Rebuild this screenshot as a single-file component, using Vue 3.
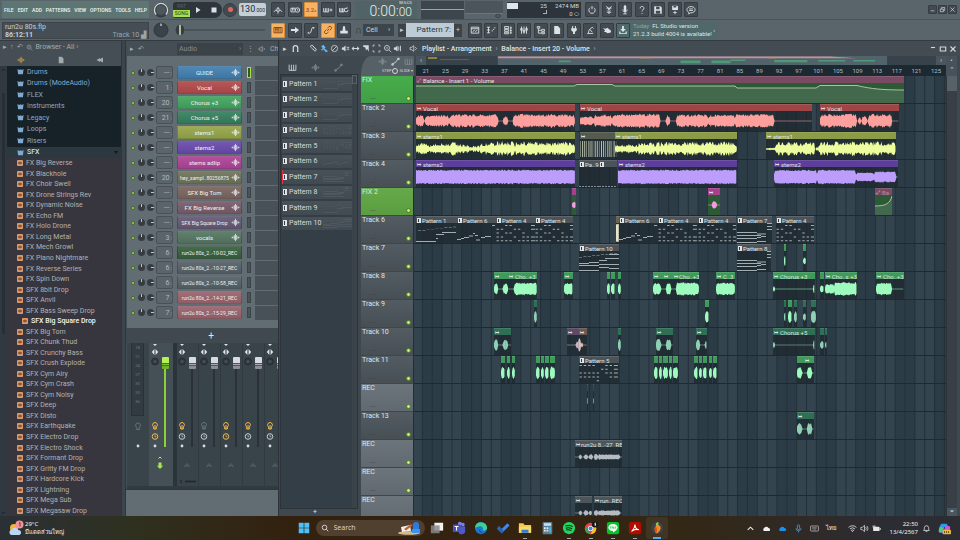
<script setup>
import { ref } from 'vue'

const menus = ['FILE', 'EDIT', 'ADD', 'PATTERNS', 'VIEW', 'OPTIONS', 'TOOLS', 'HELP']

/* Stroke icons on a 16 x 16 grid; names ending in "F" are filled. */
const icons = {
  metronome: 'M8 14V4M8 4L5.5 7M8 4L10.5 7M1.5 11L5 7.5L7 11M14.5 11L11 7.5L9 11',
  wait: 'M1.5 5H9M1.5 5V11H9M4 5V9M6.5 5V9M12 4.5A3.5 3.5 0 1 0 12 11.5A3.5 3.5 0 1 0 12 4.5M12 6.5V8.2H13.5',
  blend: 'M1 5V11H9V5M3.8 5V11M6.3 5V11M10.5 8H15M12.8 5.8V10.2',
  loop: 'M1 5V11H8V5M3.3 5V11M5.6 5V11M12 5A3 3 0 1 0 14.5 8M12 5L13.6 3.6M12 5L13.4 6.6',
  piano: 'M1.5 4H14.5V12.5H1.5ZM4.7 4V12M8 4V12M11.3 4V12M4.7 4V8.5M8 4V8.5',
  arrowF: 'M1.5 6.5H8V3L14.5 8L8 13V9.5H1.5Z',
  curve: 'M3 13H6C9 13 8 6 10.5 4H13M3 13L4 11M13 4L12 6',
  link: 'M6.5 9.5L10 6M7 5L9.5 2.8A2.4 2.4 0 0 1 13 6.2L10.8 8.8M9 11L6.5 13.2A2.4 2.4 0 0 1 3 9.8L5.2 7.2',
  stampF: 'M6.5 2H9.5L10.3 9H14V13.5H2V9H5.7Z',
  playlist: 'M2 3.5H14V13H2ZM2 6H14M4 11L7 8.5L9 10.5L12 8',
  roll: 'M1.5 3.5H6.5M1.5 8H6.5M1.5 12.5H6.5M4 3.5V12.5M9 9.5H11M11 7H13M13 4.5H15',
  rack: 'M2.5 2.5H9V5.5H2.5ZM2.5 7H9V10H2.5ZM2.5 11.5H9V14H2.5ZM12.5 2.5V14M11 4.5H14M11 9H14M11 12.5H14',
  mixer: 'M4 2.5V14M8 2.5V14M12 2.5V14M2.8 5.5H5.2V8.5H2.8ZM6.8 8.5H9.2V11.5H6.8ZM10.8 5.5H13.2V8.5H10.8Z',
  tree: 'M2 2.5H6V5H2ZM3.8 5V13H8M3.8 8.5H8M9 7H13.5V10H9ZM9 11.5H13.5V14H9Z',
  fileF: 'M3.5 1.5H9.5L13 5.5V14.5H3.5Z',
  plugF: 'M5 1.5H6.6V5H9.4V1.5H11V5H12.5V8.5L9.5 11.2V14.5H6.5V11.2L3.5 8.5V5H5Z',
  tool: 'M3.5 13.5H13M5.5 13L6.5 8L11.5 3.5M8 7L11.5 11.5M11.5 3.5L13.5 5.5',
  pointF: 'M1.5 5L6 5.8L8.5 4.3L14.5 9L14 12L9 13L6 11L3.2 11.2L5 8.3Z',
  saveF: 'M2 2H12L14 4V14H2ZM5 2.8V6.8H10.5V2.8ZM4.5 9V13.5H11.5V9Z',
  downloadF: 'M6.5 1.5H9.5V6.5H12.5L8 11L3.5 6.5H6.5ZM2 10.5H4V13H12V10.5H14V14.5H2Z',
  power: 'M5.2 4.2A5 5 0 1 0 10.8 4.2M8 1.5V7',
  cut: 'M4 2L10 9M12 2L6 9M4.5 11.5H11.5M8 9V14.5M4 5H12',
  micF: 'M6 2.5A2 2 0 0 1 10 2.5V8A2 2 0 0 1 6 8ZM3.8 7H5A3 3 0 0 0 11 7H12.2A4.2 4.2 0 0 1 8.7 11.4V13.5H11V14.8H5V13.5H7.3V11.4A4.2 4.2 0 0 1 3.8 7Z',
  help: 'M5 5.5A3 3 0 1 1 9.5 7.8C8.3 8.6 8 9.2 8 10.5M8 12.8V14.2',
  save2F: 'M3.5 1H11.5L12.8 2.3V8H3.5ZM5.5 1.5V4H10V1.5ZM7.3 9H8.7V11H11V12.4H8.7V14.8H7.3V12.4H5V11H7.3Z',
  chat: 'M8 2.5C12 2.5 14.5 4.7 14.5 7.5S12 12.5 8 12.5H7L4.5 14.5V11.8C2.5 10.8 1.5 9.3 1.5 7.5C1.5 4.7 4 2.5 8 2.5ZM5 6.3H11M5 8.8H11',
  wave: 'M1 8H3M3.5 6V10M6 4V12M8 1.5V14.5M10 4V12M12.5 6V10M13 8H15',
  slope: 'M2.5 13L5 10.5H7L11 5.5L13.5 3M1.5 12H4V14.5H1.5ZM12 2H14.5V4.5H12Z',
  keys: 'M2 3V13H14V3M6 3V13M10 3V13',
  magnet: 'M4 13V7A4 4 0 0 1 12 7V13M2.8 13H5.4M10.6 13H13.2',
  pencil: 'M3 3L5.5 2L13 10L11 13L3 5.5ZM5.5 2L13 10M7 9L9 11',
  brushF: 'M2 4L6 1.5L10 6L8 8L14.5 13L10 14.5L6.5 9.5L3.5 12L2 10L5 7.5Z',
  no: 'M8 2.5A5.5 5.5 0 1 0 8 13.5A5.5 5.5 0 1 0 8 2.5M4 12L12 4',
  muteF: 'M1.5 6H4L8 2.5V13.5L4 10H1.5ZM9.5 5.5L10.5 4.5L15 10L14 11ZM14 4.5L15 5.5L10.5 11L9.5 10Z',
  slipF: 'M1 8L5 4V7H11V4L15 8L11 12V9H5V12Z',
  sliceF: 'M2 2H12V14L9.5 9L7 11L6 6L2 5Z',
  select: 'M2 5V2H5M11 2H14V5M14 11V14H11M5 14H2V11',
  zoom: 'M7 2.5A4.5 4.5 0 1 0 7 11.5A4.5 4.5 0 1 0 7 2.5M10.5 10.5L14.5 14.5M5 7H9',
  playF: 'M1.5 6H4L8 2.5V13.5L4 10H1.5ZM9.5 4.5H11V11.5H9.5ZM12.5 3H14V13H12.5Z',
  speaker: 'M2 6H4.5L8.5 3V13L4.5 10H2ZM11 5.5L13.5 8L11 10.5',
}

const modeButtons = ['metronome', 'wait', 'count', 'blend', 'loop']
const toolButtons = ['piano', 'arrowF', 'curve', 'link', 'stampF']
const panelButtons = ['playlist', 'roll', 'rack', 'mixer', 'tree', 'fileF', 'plugF', 'tool', 'pointF', 'downloadF']
const sysButtons = ['power', 'cut', 'micF', 'help', 'saveF', 'save2F', 'chat']
const playlistTools = ['pencil', 'brushF', 'no', 'muteF', 'slipF', 'sliceF', 'select', 'zoom', 'playF']

const folders = ['Drums', 'Drums (ModeAudio)', 'FLEX', 'Instruments', 'Legacy', 'Loops', 'Risers', 'SFX']
const files = [
  'FX Big Reverse', 'FX Blackhole', 'FX Choir Swell', 'FX Drone Strings Rev', 'FX Dynamic Noise', 'FX Echo FM',
  'FX Holo Drone', 'FX Long Metal', 'FX Mech Growl', 'FX Piano Nightmare', 'FX Reverse Series', 'FX Spin Down',
  'SFX 8bit Drop', 'SFX Anvil', 'SFX Bass Sweep Drop', 'SFX Big Square Drop', 'SFX Big Tom', 'SFX Chunk Thud',
  'SFX Crunchy Bass', 'SFX Crush Explode', 'SFX Cym Airy', 'SFX Cym Crash', 'SFX Cym Noisy', 'SFX Deep',
  'SFX Disto', 'SFX Earthquake', 'SFX Electro Drop', 'SFX Electro Shock', 'SFX Formant Drop', 'SFX Gritty FM Drop',
  'SFX Hardcore Kick', 'SFX Lightning', 'SFX Mega Sub', 'SFX Megasaw Drop',
]
const selectedFile = ref('SFX Big Square Drop')

const channels = [
  ['GUIDE', '---', '#4480b0', 1], ['Vocal', '1', '#b24a4b', 1], ['Chorus +3', '20', '#43a560', 1],
  ['Chorus +5', '21', '#357f5e', 1], ['stems1', '---', '#96a548', 1], ['stems2', '---', '#694bab', 1],
  ['stems adlip', '---', '#ae4597', 1], ['hey_sampl..80256875', '20', '#71745a', 1],
  ['SFX Big Tom', '---', '#7a665f', 1], ['FX Big Reverse', '---', '#785b6a', 1],
  ['SFX Big Square Drop', '---', '#665a76', 1], ['vocals', '3', '#557760', 1],
  ['run2u 80s_2..-10-02_REC', '6', '#38603f', 0], ['run2u 80s_2..-10-27_REC', '6', '#566168', 0],
  ['run2u 80s_2..-10-58_REC', '6', '#566168', 0], ['run2u 80s_2..-14-21_REC', '7', '#99646c', 0],
  ['run2u 80s_2..-15-29_REC', '7', '#99646c', 0],
].map(([name, out, color, wave]) => ({ name, out, color, wave }))

const strips = [
  { master: true, lit: true, clock: true },
  { lit: true }, { lit: false }, { lit: true, clock: true }, { lit: true }, { lit: true },
]

const patterns = Array.from({ length: 10 }, (_, i) => 'Pattern ' + (i + 1))
const bars = Array.from({ length: 27 }, (_, i) => 21 + i * 4)

/* Timeline geometry, in units of the lane's view box. */
const LANE = 532
const ORIGIN = 414
const beatLines = Array.from({ length: 55 }, (_, i) => -2 + i * 9.85)
const shades = Array.from({ length: 14 }, (_, i) => 28 + (i - 1) * 39.4)

function rng(seed) {
  let s = seed * 7919 + 13
  return () => ((s = (s * 16807) % 2147483647) / 2147483647)
}
function wavePath(x0, x1, env, seed, rough) {
  const r = rng(seed)
  const top = []
  const bottom = []
  for (let x = x0; x <= x1; x += 0.7) {
    let a = 0.3
    for (const [s, e, v] of env) {
      if (x >= s && x <= e) {
        const edge = Math.min(1, (x - s + 0.6) / 1.6, (e - x + 0.6) / 1.6)
        a = v * edge * (1 - rough * r())
      }
    }
    top.push(`${(x - x0).toFixed(1)} ${(10 - a).toFixed(1)}`)
    bottom.unshift(`${(x - x0).toFixed(1)} ${(10 + a * (1 - rough * 0.3 * r())).toFixed(1)}`)
  }
  return 'M' + top.concat(bottom).join('L') + 'Z'
}

const dots = {
  4: ['..xx....W', 'xx..xx..W', 'x.xx..x.', 'xx..x.xxW', 'xxxx.xxxW'],
  5: ['xxxx..xxW', '.....xx.W', 'xxxxx.xxW', 'xxxxx..xW', '....x...'],
}
function notePath(kind, w) {
  const bar = (x, y, l, h = 0.9) => `M${x} ${y}h${l}v${h}h${-l}z`
  let d = ''
  if (dots[kind]) {
    dots[kind].forEach((row, j) => [...row].forEach((c, i) => {
      if (c !== '.') d += bar(0.5 + i * 4.3, 2 + j * 3.8, c === 'W' ? 4 : 2.4, 1)
    }))
  } else if (kind === 1) {
    for (let i = 0; i < 9; i++) d += bar(2 + i * 4.4, 7 - Math.floor(i / 2) * 0.8, 3, 0.4)
    d += bar(0, 18, 20) + bar(20, 11, 8) + bar(26, 9, 14) + bar(20, 15, 2)
  } else if (kind === 6) {
    d += bar(0, 16, 4) + bar(4, 15, 3) + bar(7, 14, 5) + bar(12, 12.5, 4) + bar(16, 10, 2) + bar(18, 12, 3)
      + bar(19, 16.5, 4) + bar(24, 14, 4) + bar(28, 13, 6) + bar(35, 2, 3)
  } else if (kind === 7 || kind === 8) {
    d += bar(0, 9, 20) + bar(0, 12, 24) + bar(0, 15, 20) + bar(0, 19, 20) + bar(20, 10.5, 9) + bar(20, 14, 4)
      + bar(24, 13, 5) + bar(30, 0, 5) + bar(30, 3, 5) + bar(30, 6, 5) + bar(20, 18, 9)
  } else if (kind === 10) {
    for (let i = 0; i < 9; i++) d += bar(i * 4.4, 6 - i * 0.5, 3, 0.4)
    d += bar(0, 12, 10) + bar(10, 11, 10) + bar(20, 9, 8) + bar(26, 7, 14) + bar(0, 14, 20) + bar(20, 13, 8)
      + bar(30, 3, 10) + bar(28, 13, 12) + bar(0, 19, 20) + bar(20, 16, 10) + bar(30, 17, 10)
  } else if (kind === 9) {
    for (let i = 0; i < w; i += 3) d += bar(i, 19, 2, 0.8)
  }
  return d
}

let seed = 1
const pos = (x0, x1) => ({ left: ((x0 - ORIGIN) / LANE) * 100 + '%', width: ((x1 - x0) / LANE) * 100 + '%' })
function audio(x0, x1, head, fill, name = '', env = null, rough = 0.35) {
  return {
    type: 'audio', w: x1 - x0, style: pos(x0, x1), head, fill, name,
    path: wavePath(x0, x1, env || [[x0, x1, 6.5]], seed++, rough),
  }
}
function pattern(x0, x1, kind, name = 'Pattern ' + kind) {
  return { type: 'pattern', w: x1 - x0, style: pos(x0, x1), head: '#4c545a', fill: '#a3aeb3', name, path: notePath(kind, x1 - x0) }
}
function auto(x0, x1, name, line, area) {
  return { type: 'auto', w: x1 - x0, style: pos(x0, x1), head: '#7a4a62', fill: 'none', name, path: line, area }
}
const vocal = (a, b, env) => audio(a, b, '#a04546', '#fd9f9d', 'Vocal', env, 0.4)
const stem1 = (a, b, env) => audio(a, b, '#8c9b45', '#edfc9c', 'stems1', env, 0.6)
const stem2 = (a, b, env) => audio(a, b, '#5e3e9b', '#bc9dfc', 'stems2', env, 0.18)
const g = (a, b, name = '', env = null) => audio(a, b, '#3f9a5b', '#9dfcbd', name, env, 0.25)
const t = (a, b, name = '', env = null) => audio(a, b, '#2f6f55', '#8fd0b4', name, env, 0.25)
const rec = (a, b, name, env) => audio(a, b, '#4d565c', '#b4bcc2', name, env, 0.3)
const slivers = (fn, list) => list.map(([a, b]) => fn(a, b))

const stutter = Array.from({ length: 18 }, (_, i) => {
  const x = (i * 2.1).toFixed(1)
  return `M${x} 2h${i % 3 ? 1 : 0.6}v16h${i % 3 ? -1 : -0.6}z`
}).join('')

const tracks = [
  { name: 'FIX', tone: 'fix', clips: [
    auto(416, 904, 'Balance - Insert 1 - Volume',
      'M0 3H158L161 1.5H196L199 3H319L321 5H400L404 2.5H441C455 6 468 7 488 7',
      'M0 3H158L161 1.5H196L199 3H319L321 5H400L404 2.5H441C455 6 468 7 488 7V20H0Z'),
  ] },
  { name: 'Track 2', clips: [
    vocal(416, 575, [[416, 424, 6], [425, 449, 6.5], [449.5, 498, 7], [503, 508, 5], [513, 575, 7.2]]),
    vocal(580, 812, [[580, 595, 5], [594, 612, 6.5], [612, 660, 7.6], [666, 670, 6.5], [676, 708, 6.8], [708, 735, 6.6], [735, 774, 7.2]]),
    vocal(820, 899, [[820, 857, 7.4], [858, 861, 5], [862, 867, 6], [868, 892, 7.2]]),
  ] },
  { name: 'Track 3', clips: [
    stem1(416, 575, [[416, 430, 6], [430, 450, 6.5], [450, 458, 8], [458, 470, 5], [470, 480, 3.6], [480, 495, 6.6], [495, 515, 8], [515, 575, 7.6]]),
    { type: 'audio', w: 37, style: pos(580, 617), head: '#545a4c', fill: '#b9bfa8', name: '', path: stutter },
    stem1(615, 737, [[615, 640, 5], [638, 655, 7], [655, 660, 8.5], [660, 737, 7.4]]),
    stem1(766, 896, [[766, 776, 1.6], [775, 815, 7.2], [816, 818, 3], [818, 896, 7.8]]),
  ] },
  { name: 'Track 4', clips: [
    stem2(416, 575, [[415, 576, 7.4]]),
    pattern(579, 599, 9, 'Pa..9'), pattern(599, 617, 9, ' '),
    stem2(618, 737, [[617, 738, 7.4]]),
    stem2(774, 898, [[774, 817, 7.2], [817, 856, 7.4], [856, 874, 4.6], [874, 896, 5.6]]),
  ] },
  { name: 'FIX 2', tone: 'fix2', clips: [
    audio(572, 576, '#a6408f', '#f79be0', '', [[572, 576, 3.4]]),
    audio(708, 720, '#a6408f', '#f79be0', '', [[712, 717, 4.4]]),
    auto(875, 892, 'Ba', 'M0 11C10 11 15 9 17 1', 'M0 11C10 11 15 9 17 1V20H0Z'),
  ].map((c) => ({ ...c, green: true })) },
  { name: 'Track 6', clips: [
    pattern(416, 457, 1), pattern(457, 496, 6), pattern(496, 535, 4), pattern(535, 573, 4),
    audio(616, 619, '#6a6552', '#e9e4c8', '', [[615, 620, 9]], 0.05),
    pattern(619, 658, 6), pattern(658, 698, 4), pattern(698, 736, 4), pattern(737, 772, 7), pattern(776, 814, 4),
  ] },
  { name: 'Track 7', clips: [pattern(579, 619, 10), pattern(737, 771, 8), g(784, 786), g(803, 806, '', [[803, 806, 4]])] },
  { name: 'Track 8', clips: [
    g(494, 508, '', [[494, 498, 6], [503, 508, 5.5]]),
    g(508, 537, 'Cho..+3', [[514, 537, 6.6]]),
    ...slivers(g, [[564, 573], [607, 610], [611, 615], [618, 621]]),
    g(653, 663, '', [[653, 661, 6]]), g(663, 673, '', [[666, 671, 6]]), g(673, 699, 'Cho..+3', [[676, 699, 6.8]]),
    g(716, 735, 'C..3'), g(773, 815, 'Chorus +3', [[773, 775, 4], [813, 815, 6]]),
    g(820, 824, '', [[820, 824, 4]]), g(825, 857, 'Cho..s +3', [[825, 835, 5], [834, 857, 7]]), g(876, 904, 'Cho..+3', [[876, 892, 6.4]]),
  ] },
  { name: 'Track 9', clips: [
    ...slivers(t, [[534, 537], [784, 786]]), ...slivers(g, [[705, 709], [788, 792]]),
    t(794, 797), t(803, 806, '', [[803, 806, 4]]), t(811, 816),
  ] },
  { name: 'Track 10', clips: [
    t(494, 506, '', [[494, 498, 6], [503, 507, 6]]), t(506, 511, '', [[505, 508, 5]]),
    audio(567, 579, '#5c4b62', '#c8b6c8', '', [[576, 578, 4], [578, 582, 8]], 0.1), audio(579, 587, '#6d5850', '#d8bdb0', '', [[576, 581, 7], [581, 583, 3]], 0.1),
    t(618, 621), t(656, 673, '', [[656, 661, 6], [666, 671, 6]]), t(696, 707, '', [[696, 700, 6], [705, 707, 5]]),
    t(773, 815, 'Chorus +5', [[773, 775, 4], [813, 815, 6]]), t(820, 824, '', [[820, 824, 4]]), t(825, 827, '', [[825, 827, 4]]),
  ] },
  { name: 'Track 11', clips: [
    ...slivers(g, [[501, 505], [507, 510], [512, 515], [536, 540], [541, 544], [545, 549], [550, 555]]),
    pattern(579, 619, 5),
    ...slivers(g, [[654, 658], [659, 662], [663, 668], [669, 672], [673, 678], [694, 698], [699, 702], [703, 707], [709, 712], [713, 717]]),
    g(797, 804, '', [[797, 802, 6]]), g(804, 814, '', [[807, 812, 6]]),
  ] },
  { name: 'REC', tone: 'rec', clips: [audio(587, 588, '#3c4a38', '#a9b98c', '', [[586, 589, 3]]), audio(593, 594, '#3c4a38', '#a9b98c', '', [[592, 595, 3]])] },
  { name: 'Track 13', clips: [t(797, 814, '', [[797, 802, 6], [807, 812, 6]])] },
  { name: 'REC', tone: 'rec', clips: [rec(575, 622, 'run2u 8..-27_REC', [[579, 582, 3], [584, 588, 3], [589, 593, 3], [594, 598, 3.4], [598, 620, 2.8]])] },
  { name: 'REC', tone: 'rec', clips: [] },
  { name: 'REC', tone: 'rec', clips: [
    rec(575, 592, '', [[579, 582, 3], [584, 588, 3], [589, 592, 3]]),
    rec(594, 622, 'run..REC', [[594, 598, 3.4], [598, 620, 2.8]]),
  ] },
]

const isFilled = (n) => n.endsWith('F')
</script>

<template>
  <div class="app">
    <header class="top">
      <div class="bar row1">
        <nav class="menu"><button v-for="m in menus" :key="m">{{ m }}</button></nav>
        <svg class="knob" viewBox="0 0 16 16"><circle cx="8" cy="8" r="7" class="ring" /><path d="M3.2 12.6A6.6 6.6 0 1 1 12.8 12.6" class="arc" /><circle cx="8" cy="8" r="4.8" class="cap" /></svg>
        <div class="transport">
          <div class="pill">
            <button class="mode"><small>PAT</small><small class="on">SONG</small></button>
            <button aria-label="Play"><svg viewBox="0 0 8 8"><path d="M2 1L6.5 4L2 7Z" /></svg></button>
            <button aria-label="Stop"><svg viewBox="0 0 8 8"><path d="M1.5 1.5H6.5V6.5H1.5Z" /></svg></button>
          </div>
          <button class="record" aria-label="Record"><i></i></button>
          <output class="tempo">130<small>.000</small></output>
        </div>
        <div class="buttons">
          <button v-for="n in modeButtons" :key="n" class="tb" :class="{ hot: n === 'count' }" :aria-label="n">
            <span v-if="n === 'count'" class="count">3.2ₓ</span>
            <svg v-else viewBox="0 0 16 16"><path :d="icons[n]" /></svg>
          </button>
        </div>
        <div class="clock"><small>M:S:CS</small><output>0:00:<span>00</span></output></div>
        <svg class="scope" viewBox="0 0 82 18" preserveAspectRatio="none"><rect width="43" height="18" fill="#3d464c" /><path d="M0 8.5H43" stroke="#9aa8ad" /><rect x="44" width="38" height="12" fill="#4b555b" /><path d="M44 12.5H82" stroke="#6a757b" /><ellipse cx="77" cy="15" rx="2.4" ry="1.4" fill="none" stroke="#343c42" /></svg>
        <div class="cpu"><i></i><span>25</span><span>2474 MB</span><b></b><em></em><span>0 ⬭</span></div>
        <div class="buttons">
          <button v-for="n in sysButtons" :key="n" class="tb" :aria-label="n">
            <svg viewBox="0 0 16 16" :class="{ fill: isFilled(n) }"><path :d="icons[n]" /></svg>
          </button>
        </div>
        <div class="win">
          <button class="tb" aria-label="Minimize"><svg viewBox="0 0 16 16"><path d="M4 11H12" /></svg></button>
          <button class="tb" aria-label="Restore"><svg viewBox="0 0 16 16"><path d="M3 7H10V13H3ZM6 7V3.5H13V10H10" /></svg></button>
          <button class="tb" aria-label="Close"><svg viewBox="0 0 16 16"><path d="M3.5 3.5L12.5 12.5M12.5 3.5L3.5 12.5" /></svg></button>
        </div>
      </div>
      <div class="bar row2">
        <div class="hint"><p>run2u 80s.flp</p><p><b>86:12:11</b><span>Track 10 ▟</span></p></div>
        <svg class="knob" viewBox="0 0 16 16"><circle cx="8" cy="8" r="7" class="ring" /><circle cx="8" cy="8" r="5" class="cap dark" /><path d="M8 1.5V4" class="arc" /></svg>
        <input class="pitch" type="range" min="0" max="100" value="3" aria-label="Song position" />
        <div class="buttons">
          <button v-for="n in toolButtons" :key="n" class="tb" :class="{ hot: n === 'piano' || n === 'link' }" :aria-label="n">
            <svg viewBox="0 0 16 16" :class="{ fill: isFilled(n) }"><path :d="icons[n]" /></svg>
          </button>
        </div>
        <div class="snap">
          <svg viewBox="0 0 16 16"><path :d="icons.magnet" /></svg>
          <select aria-label="Snap"><option>Cell</option></select><i>›</i>
        </div>
        <div class="patsel"><button aria-label="Previous">▸</button><output>Pattern 7<i>:</i></output><button>+</button></div>
        <div class="buttons">
          <button v-for="n in panelButtons" :key="n" class="tb" :class="{ teal: n === 'downloadF' }" :aria-label="n">
            <svg viewBox="0 0 16 16" :class="{ fill: isFilled(n) }"><path :d="icons[n]" /></svg>
          </button>
        </div>
        <a class="news" href="#"><span><em>Today</em>&nbsp; FL Studio version<br />21.2.3 build 4004 is available!</span><i>›</i></a>
      </div>
    </header>

    <main class="work">
      <aside class="browser">
        <div class="bhead">
          <div class="crumb"><span>▸</span><span>↑</span><span>↶</span><svg viewBox="0 0 16 16"><path :d="icons.zoom" /></svg><span>Browser - All ›</span></div>
          <div class="btabs">
            <svg viewBox="0 0 16 16" class="gold"><path :d="icons.wave" /></svg>
            <svg viewBox="0 0 16 16" class="fill"><path :d="icons.fileF" /></svg>
            <svg viewBox="0 0 16 16" class="fill"><path d="M1 8L8 4V6L14 3V13L8 10V12Z" /></svg>
          </div>
        </div>
        <div class="blist">
          <div class="rail">
            <svg viewBox="0 0 7 7"><path d="M2 4.5L3.5 3L5 4.5" /></svg>
            <i></i>
            <svg viewBox="0 0 7 7"><path d="M2 3L3.5 4.5L5 3" /></svg>
          </div>
          <div class="items">
            <ul class="folders">
              <li v-for="f in folders" :key="f" :class="{ open: f === 'SFX' }"><svg viewBox="0 0 16 16"><path d="M1 2L5 4.5L8 3L11 4.5L15 2L13.5 14H2.5Z" /></svg>{{ f }}</li>
            </ul>
            <ul class="files">
              <li v-for="f in files" :key="f" :class="{ sel: f === selectedFile }" @click="selectedFile = f">
                <svg viewBox="0 0 12 12"><rect width="12" height="12" rx="1.5" /><path d="M2 6H10M4 4V8M6 3V9M8 4.5V7.5" /></svg>{{ f }}
              </li>
            </ul>
          </div>
        </div>
      </aside>

      <section class="rack">
        <div class="rhead">
          <span>▸</span><span>↶</span>
          <div class="rsel"><select aria-label="Channel filter"><option>Audio</option></select><i>›</i></div>
          <span class="dim">⋮</span>
          <svg viewBox="0 0 16 16"><path :d="icons.speaker" /></svg><span>Cha</span>
        </div>
        <ul class="channels">
          <li v-for="(c, i) in channels" :key="i">
            <i class="led"></i><i class="dial"></i><i class="dial r"></i>
            <output>{{ c.out }}<small>:</small></output>
            <button :class="{ long: c.name.length > 18 }" :style="{ backgroundColor: c.color }"><span>{{ c.name }}</span><svg v-if="c.wave" viewBox="0 0 16 16"><path :d="icons.wave" /></svg></button>
            <i class="lamp" :class="{ on: i === 0 }"></i><i class="steps"></i>
          </li>
        </ul>
        <button class="add">+</button>
        <div class="mixer">
          <div class="scale"><ol><li>18</li><li>21</li><li>24</li><li>27</li><li>30</li><li>33</li><li>36</li></ol><svg viewBox="0 0 10 30"><path d="M5 1A2.4 2.4 0 0 1 6.3 5.4V7.5H3.7V5.4A2.4 2.4 0 0 1 5 1Z" fill="none" stroke="#68737a" /><circle cx="5" cy="24" r="1.4" fill="#d7dde0" /></svg></div>
          <div v-for="(s, i) in strips" :key="i" class="strip" :class="{ master: s.master }">
            <svg class="col" viewBox="0 0 10 106">
              <path d="M3 1H7L5 3Z" fill="#dfe5e8" />
              <path d="M4.4 6V12L1.8 9ZM5.6 6V12L8.2 9Z" fill="#dfe5e8" />
              <circle cx="5" cy="18.5" r="3.4" fill="#30383d" stroke="#272e33" /><circle cx="5" cy="18.5" r="1.6" fill="#465056" />
              <path d="M5 79.5A2.4 2.4 0 0 1 6.3 83.9V86H3.7V83.9A2.4 2.4 0 0 1 5 79.5ZM5 82V86" fill="none" :stroke="s.lit ? '#f5b94c' : '#68737a'" />
              <circle cx="5" cy="93.5" r="2.8" fill="none" :stroke="s.clock ? '#f5b94c' : '#c5cdd1'" /><path d="M5 92V93.8H6.4" fill="none" :stroke="s.clock ? '#f5b94c' : '#c5cdd1'" stroke-width=".7" />
              <circle cx="5" cy="103" r="1.4" fill="#d7dde0" />
            </svg>
            <input type="range" min="0" max="100" value="100" :aria-label="'Fader ' + i" />
            <svg class="send" viewBox="0 0 20 30">
              <g v-if="s.master"><path d="M10 7L13.2 10.2H11.5V13.5H8.5V10.2H6.8Z" transform="rotate(180 10 10)" fill="#a5e552" /><path d="M8.5 2.5L10 1L11.5 2.5" fill="none" stroke="#cfd6d9" /></g>
              <path v-else d="M7.5 10.5L10 7.5L12.5 10.5L10 9.5Z" fill="none" stroke="#56616a" />
              <path v-if="i === 1" d="M5 24L3 25.5L5 27" fill="none" stroke="#1f272c" /><path v-if="i === 1" d="M8 25.5H19" stroke="#1f272c" stroke-width="1.6" />
            </svg>
          </div>
        </div>
        <div class="below"></div>
      </section>

      <section class="playlist">
        <div class="ptitle">
          <span>▸</span><svg viewBox="0 0 16 16" class="thick"><path :d="icons.magnet" /></svg>
          <span class="tools"><svg v-for="n in playlistTools" :key="n" viewBox="0 0 16 16" :class="{ fill: isFilled(n), blue: n === 'brushF' }"><path :d="icons[n]" /></svg></span>
          <svg viewBox="0 0 16 16"><path :d="icons.speaker" /></svg>
          <h1>Playlist - Arrangement <i>›</i> Balance - Insert 20 - Volume <i>›</i></h1>
          <div class="pwin"><svg viewBox="0 0 16 16"><path d="M4 5H12" /></svg><svg viewBox="0 0 16 16"><path d="M2.5 4H13.5V12H2.5Z" /></svg><svg viewBox="0 0 16 16"><path d="M3 3L13 13M13 3L3 13" /></svg></div>
        </div>
        <div class="pbody">
          <div class="picker">
            <div class="ptabs">
              <svg viewBox="0 0 16 16" class="lit"><path :d="icons.keys" /></svg>
              <svg viewBox="0 0 16 16"><path :d="icons.wave" /></svg>
              <svg viewBox="0 0 16 16"><path :d="icons.slope" /></svg>
            </div>
            <div class="plist">
              <ul>
                <li v-for="(p, i) in patterns" :key="p" :class="{ cur: i === 6 }"><i class="pi"></i><span>{{ p }}</span>
                  <svg viewBox="0 0 40 20" preserveAspectRatio="none"><path :d="notePath([1, 1, 1, 4, 5, 6, 7, 8, 1, 10][i], 40)" /></svg>
                </li>
              </ul>
              <div class="pscroll"><i></i></div>
            </div>
            <button class="padd">+</button>
          </div>

          <div class="arr">
            <div class="tabs">
              <div><svg viewBox="0 0 16 16"><path :d="icons.wave" /></svg><svg viewBox="0 0 16 16" class="lit"><path :d="icons.slope" /></svg><svg viewBox="0 0 16 16"><path :d="icons.keys" /></svg></div>
              <div class="tiny">STEP<i></i>SLIDE ▾</div>
            </div>
            <div class="topline">
              <div class="mini">
                <button>‹</button>
                <svg viewBox="0 0 511 10" preserveAspectRatio="none">
                  <rect width="511" height="10" fill="#38424a" /><rect x="72" width="390" height="10" fill="#52636c" />
                  <path d="M2 1.5H11V3H2Z" fill="#b9a23c" /><path d="M14 3.5H43V4.5H14Z" fill="#7d565c" />
                  <path d="M72 .5H405L432 2.5H72Z" fill="#c98f97" /><path d="M133 5H145V7H133ZM255 5H275V8H255ZM286 5H305V8H286ZM305 4H320V5.5H305ZM349 4.5H382V7H349ZM393 4.5H420V6H393ZM428 4.5H450V6H428Z" fill="#4f9a76" />
                  <path d="M214 1H225V2.5H214ZM343 1H352V2.5H343Z" fill="#b9a23c" />
                </svg>
                <button>›</button>
              </div>
              <div class="ruler"><span v-for="b in bars" :key="b">{{ b }}</span></div>
            </div>
            <div class="corner"><span>•</span><span>⌃</span></div>

            <div class="heads">
              <div v-for="(k, i) in tracks" :key="i" class="head" :class="k.tone"><span>{{ k.name }}</span><small>...</small><i></i></div>
            </div>
            <div class="lanes">
              <svg class="grid" viewBox="0 0 532 448" preserveAspectRatio="none">
                <rect width="532" height="448" fill="#2c3c47" />
                <rect v-for="s in shades" :key="s" :x="s" width="19.7" height="448" fill="#33444e" />
                <rect v-for="b in beatLines" :key="b" :x="b" width="1" height="448" fill="#243039" />
              </svg>
              <div class="rows">
                <div v-for="(k, i) in tracks" :key="i" class="lane">
                  <div v-for="(c, j) in k.clips" :key="j" class="clip" :class="[c.type, { green: c.green }]" :style="c.style">
                    <div class="ch" :style="{ backgroundColor: c.head }">
                      <i v-if="c.type === 'pattern'" class="pi"></i><i v-else-if="c.w > 7" class="mk">{{ c.type === 'auto' ? '⤢' : '↦' }}</i>
                      <span v-if="c.name" :class="{ faint: c.name === 'Ba' }">{{ c.name }}</span>
                    </div>
                    <svg :viewBox="`0 0 ${c.w} 20`" preserveAspectRatio="none">
                      <path v-if="c.area" :d="c.area" fill="#42694b" />
                      <path :d="c.path" :fill="c.fill" :stroke="c.area ? '#a9c3a4' : 'none'" />
                    </svg>
                  </div>
                </div>
              </div>
            </div>
            <div class="vscroll"><i></i><b>⌄</b></div>
          </div>
        </div>
      </section>
    </main>

    <footer class="taskbar">
      <a class="weather" href="#">
        <svg viewBox="0 0 16 16"><circle cx="6" cy="8" r="4" fill="#f5b23a" /><path d="M3 15A3 3 0 0 1 3.5 9.5A4 4 0 0 1 10.5 10A2.6 2.6 0 0 1 11.5 15Z" fill="#b9d6f7" /><circle cx="11.5" cy="4.5" r="4" fill="#f0939a" /><path d="M11 3.2L12 2.5V6.5" stroke="#4a1c20" fill="none" stroke-width=".8" /></svg>
        <span>29°C<br />มีแดดส่วนใหญ่</span>
      </a>
      <div class="apps">
        <button aria-label="Start"><svg viewBox="0 0 16 16"><path d="M2 2H7.6V7.6H2ZM8.4 2H14V7.6H8.4ZM2 8.4H7.6V14H2ZM8.4 8.4H14V14H8.4Z" fill="#4fc0f5" /></svg></button>
        <label class="search"><svg viewBox="0 0 16 16"><circle cx="7" cy="7" r="4.6" fill="none" stroke="#e8e8e8" stroke-width="1.6" /><path d="M10.5 10.5L14.5 14.5" stroke="#e8e8e8" stroke-width="1.8" /></svg><input type="text" placeholder="Search" />
          <svg class="art" viewBox="0 0 24 14"><ellipse cx="11" cy="12" rx="11" ry="1.8" fill="#d8b98a" /><path d="M3 6L12 4L13 10L4 11Z" fill="#f3efe8" /><path d="M6 8L13 3L14.5 4.5L8 9.5Z" fill="#b8643a" /><path d="M15 11V4A3 3 0 0 1 21 4V11Z" fill="#2c7be0" /><path d="M14 8H22V12H14Z" fill="#3b93f2" /></svg></label>
        <button aria-label="Task view"><svg viewBox="0 0 16 16"><rect x="5" y="2" width="10" height="9" fill="#f1f1f1" /><rect x="1" y="5" width="10" height="9" fill="#8a8a8a" opacity=".85" /></svg></button>
        <button aria-label="Teams"><svg viewBox="0 0 16 16"><circle cx="12.5" cy="4" r="2" fill="#7b83eb" /><circle cx="9" cy="3.2" r="2.3" fill="#7b83eb" /><path d="M7 6H15V10A4 4 0 0 1 7 12Z" fill="#5059c9" /><rect x="1" y="4" width="8.5" height="8.5" rx="1" fill="#4b53bc" /><path d="M3 6.2H7.5M5.2 6.2V10.8" stroke="#fff" stroke-width="1.2" /></svg></button>
        <button aria-label="Edge"><svg viewBox="0 0 16 16"><circle cx="8" cy="8" r="7" fill="#1a78cf" /><path d="M1.2 7A7 7 0 0 1 15 8C15 10.5 12 11.5 10 10.5C11 8 9 5.5 6.5 6C4 6.3 2 8 1.2 7Z" fill="#3fd08f" /><path d="M6 9C5 12 8 14.5 12 13.7A7 7 0 0 1 6 9Z" fill="#0e4a94" /></svg></button>
        <button aria-label="To Do"><svg viewBox="0 0 16 16"><path d="M1 8.5L3.5 6L6.5 9L13 2.5L15.5 5L6.5 14Z" fill="#3c8ceb" /><path d="M1 8.5L3.5 6L9 11.5L6.5 14Z" fill="#2562b8" /></svg></button>
        <button aria-label="Files" class="run"><svg viewBox="0 0 16 16"><path d="M1 2.5H6L7.5 4.5H15V13.5H1Z" fill="#f7c948" /><path d="M1 6.5H15V13.5H1Z" fill="#fbd968" /><path d="M4 10H12V13.5H4Z" fill="#2d7fd3" /></svg></button>
        <button aria-label="Calculator"><svg viewBox="0 0 16 16"><rect x="3" y="1" width="11" height="14" rx="1" fill="#5d7f95" /><rect x="4.5" y="2.5" width="8" height="3" fill="#bfe4f5" /><path d="M4.5 7H6.5V9H4.5ZM7.5 7H9.5V9H7.5ZM4.5 10H6.5V12H4.5ZM7.5 10H9.5V12H7.5Z" fill="#e1eef5" /><path d="M10.5 7H12.5V13H10.5Z" fill="#4ab6ef" /></svg></button>
        <button aria-label="Spotify" class="run"><svg viewBox="0 0 16 16"><circle cx="8" cy="8" r="7" fill="#1ed760" /><path d="M4 5.8Q8.5 4.4 12.3 6.4M4.4 8.2Q8.3 7.1 11.6 8.8M4.8 10.4Q8 9.6 10.8 11" stroke="#10240f" stroke-width="1.2" fill="none" /></svg></button>
        <button aria-label="Chrome" class="run"><svg viewBox="0 0 16 16"><circle cx="7.5" cy="8.5" r="6.5" fill="#e8453c" /><path d="M1.9 5.3L5 10.5L7.5 15A6.5 6.5 0 0 1 1.9 5.3Z" fill="#34a853" /><path d="M7.5 15L10.5 9L10 5.5H13.3A6.5 6.5 0 0 1 7.5 15Z" fill="#fbc116" /><circle cx="7.5" cy="8.5" r="3" fill="#fff" /><circle cx="7.5" cy="8.5" r="2.3" fill="#4285f4" /><circle cx="12.5" cy="4" r="3.5" fill="#17181b" /><path d="M12 2.5L13 1.5L14 4.5L12.5 6Z" fill="#e6e6e6" /></svg></button>
        <button aria-label="Line" class="run"><svg viewBox="0 0 16 16"><rect x="1" y="1" width="14" height="14" rx="2.5" fill="#06c12c" /><path d="M8 3.5C11.3 3.5 13.3 5.3 13.3 7.5C13.3 9.7 10.5 11.8 8 13V11.5C4.7 11.4 2.7 9.7 2.7 7.5S4.7 3.5 8 3.5Z" fill="#fff" /><path d="M5 6.3V8.7M7 8.7V6.3L9 8.7V6.3M11 6.3V8.7" stroke="#06c12c" stroke-width=".8" fill="none" /></svg></button>
        <button aria-label="Acrobat" class="run"><svg viewBox="0 0 16 16"><rect x="1" y="1" width="14" height="14" rx="2.5" fill="#b30b00" /><path d="M4 12C6 10 8 6 8 4M8 4C8 7 10 9.5 12.5 10C10 9.3 6 10 4 12" stroke="#fff" stroke-width="1.2" fill="none" /></svg></button>
        <button aria-label="FL Studio" class="run active"><svg viewBox="0 0 16 16"><circle cx="8" cy="8" r="7" fill="#3b4348" /><path d="M7 5C10 3.5 13 6 12 9C11 12 8.5 14.5 7 14C5 12 4.5 7 7 5Z" fill="#f58a1f" /><path d="M6 6C7.5 6.5 8.5 10 7.5 13.5C5 12 4.5 8 6 6Z" fill="#e0481c" /><path d="M7 5C6 3 8 1 9.5 1.5C10 3 9.5 4.5 8 5.2Z" fill="#9fd04a" /></svg></button>
      </div>
      <div class="tray">
        <svg viewBox="0 0 16 16"><path d="M3 10.5L8 5.5L13 10.5" stroke="#eee" stroke-width="1.8" fill="none" /></svg>
        <svg viewBox="0 0 16 16"><path d="M3.5 12.5A3 3 0 0 1 3.5 7.5A4.5 4.5 0 0 1 11.5 7A3 3 0 0 1 13 12.5Z" fill="#f0f0f0" /></svg>
        <svg viewBox="0 0 16 16"><path d="M3.5 12.5A3 3 0 0 1 3.5 7.5A4.5 4.5 0 0 1 11.5 7A3 3 0 0 1 13 12.5Z" fill="#1e8fe6" /></svg>
        <svg viewBox="0 0 16 16"><path d="M6 3.5A2 2 0 0 1 10 3.5V8A2 2 0 0 1 6 8ZM3.5 7.5A4.5 4.5 0 0 0 12.5 7.5M8 12V15" fill="none" stroke="#4d9be0" stroke-width="1.4" /></svg>
        <svg viewBox="0 0 16 16"><rect x="1" y="3.5" width="14" height="9" rx="1" fill="none" stroke="#ddd" stroke-width="1.1" /><path d="M3.5 6.2H12.5M3.5 8.2H12.5M5 10.3H11" stroke="#ddd" stroke-dasharray="1.2 .8" /></svg>
        <span class="lang">ไทย</span>
        <span class="net">
          <svg viewBox="0 0 16 16"><path d="M1 6A10 10 0 0 1 15 6M3.5 8.8A6.5 6.5 0 0 1 12.5 8.8M6 11.3A3 3 0 0 1 10 11.3L8 13.5Z" fill="none" stroke="#eee" stroke-width="1.4" /></svg>
          <svg viewBox="0 0 16 16"><path d="M1.5 6H4L8 2.5V13.5L4 10H1.5ZM10 5.5A3.5 3.5 0 0 1 10 10.5M12 3.5A6 6 0 0 1 12 12.5" fill="none" stroke="#eee" stroke-width="1.2" /></svg>
          <svg viewBox="0 0 16 16"><rect x="2" y="5" width="11.5" height="7.5" rx="1.5" fill="#e6e6e6" /><rect x="14" y="7.3" width="1.5" height="3" fill="#eee" /><path d="M2 2V6M5 2V6M1 5H6" stroke="#eee" /></svg>
        </span>
        <time>22:50<br />13/4/2567</time>
        <svg viewBox="0 0 16 16"><path d="M3 11.5C4.5 10 4 8 4.3 6A3.8 3.8 0 0 1 11.7 6C12 8 11.5 10 13 11.5ZM6.5 13.5H9.5" fill="none" stroke="#eee" stroke-width="1.3" /></svg>
        <svg class="copilot" viewBox="0 0 16 16"><path d="M5 2H10C12 2 11.5 5 12.5 6L8 6L5 13H3C0 13 1 9 2 6S3.5 2 5 2Z" fill="#2f9be8" /><path d="M9 5H13C16 5 15 9 14 11S12 14 10.5 14H6C4 14 5 11 4 10L8 9Z" fill="#c65ad8" /><path d="M2 6C1 9 0 13 3 13H5L7 7Z" fill="#50c878" /><rect x="6" y="9.5" width="10" height="5.5" rx="1" fill="#e8b83a" /><path d="M8 11.3V13.5M10.5 11.3V13.5M13 11.3V13.5" stroke="#4a3606" /></svg>
      </div>
    </footer>
  </div>
</template>

<style>
body { margin: 0; background: #2b2f35; }
</style>

<style scoped>
.app {
  display: flex; flex-direction: column; height: 100vh; overflow: hidden;
  font-family: Roboto, "Open Sans", sans-serif; font-size: 7px; line-height: 10px; color: #c3cbcf; background: #3c454b;
}
button, input, select, output { font: inherit; color: inherit; }
button { padding: 0; border: 0; background: none; white-space: nowrap; }
ul, ol { list-style: none; margin: 0; padding: 0; }
p, h1 { margin: 0; }
i, em { font-style: normal; }
a { color: inherit; text-decoration: none; }
svg { display: block; flex: none; }
select { appearance: none; border: 0; background: transparent; padding: 0; }

/* toolbar */
.top { background: #5a646b; border-bottom: 1px solid #333b40; flex: none; }
.bar { display: grid; column-gap: 4px; align-items: center; height: 20px; padding: 0 3px 0 2px; box-sizing: border-box; }
.row1 { grid-template-columns: 147px 16px 94px 80px 62px 82px 74px 113px 1fr; border-bottom: 1px solid #4a5359; }
.row2 { grid-template-columns: 147px 16px 94px 80px 39px 66px 162px 84px; height: 20px; }
.menu { display: flex; justify-content: space-between; align-items: center; height: 17px; padding: 0 2px; background: #5d7573; color: #eef5f5; font-size: 5px; font-weight: 500; }
.hint { height: 17px; background: #454e55; padding: 0 2px; box-sizing: border-box; line-height: 8px; font-size: 7px; border: 1px solid #3d454b; color: #c6ced2; }
.hint p { display: flex; justify-content: space-between; }
.hint span { color: #9ba5ab; }
.knob { width: 16px; height: 16px; }
.ring { fill: #3a4248; stroke: #30373c; }
.arc { fill: none; stroke: #cfd6d9; stroke-width: 1.3; }
.cap { fill: #4d565d; }
.cap.dark { fill: #3a4349; }
.transport { display: flex; align-items: center; gap: 1px; }
.pill { display: flex; align-items: center; width: 49px; height: 16px; border-radius: 3px 8px 8px 3px; background: #2f363b; overflow: hidden; flex: none; }
.pill button { width: 16px; }
.pill svg { width: 8px; height: 8px; margin: auto; fill: #dbe2e5; }
.pill .mode { width: 17px; display: grid; line-height: 7px; color: #59636a; }
.pill .on { background: #a6e04e; color: #24400e; }
.mode small { font-size: 5px; line-height: 7px; }
.record { width: 14px; height: 14px; border-radius: 7px; background: #414a50; border: 1px solid #363e43; box-sizing: border-box; display: grid; place-content: center; flex: none; }
.record i { width: 5px; height: 5px; border-radius: 3px; background: #e0655c; }
.tempo { width: 27px; margin-left: 1px; height: 13px; line-height: 13px; border-radius: 2px; background: #c3d0da; color: #1f2a33; font-size: 9px; text-align: center; white-space: nowrap; flex: none; }
.tempo small { font-size: 5px; }
.buttons { display: flex; justify-content: space-between; }
.tb { width: 14px; height: 15px; background: #434b51; border: 1px solid #363d42; border-radius: 1px; box-sizing: border-box; display: grid; place-content: center; color: #dce3e6; }
.tb svg { width: 10px; height: 10px; }
.tb path, .snap path, .crumb path, .btabs path, .rhead path, .ptitle path, .ptabs path, .tabs path, .channels path { fill: none; stroke: currentColor; stroke-width: 1.4; }
svg.fill path { fill: currentColor; fill-rule: evenodd; stroke: none; }
.tb.hot { background: #f7b264; color: #7a4310; border-color: #e08c35; }
.tb.teal { background: #4d696a; }
.count { font-size: 6px; }
.clock { display: grid; justify-items: end; align-content: start; height: 18px; padding-right: 5px; background: #526365; color: #e3efee; box-sizing: border-box; }
.clock output { font-size: 14px; line-height: 13px; font-weight: 300; }
.clock span { font-size: 12px; }
.clock small { font-size: 4px; line-height: 4px; }
.scope { width: 100%; height: 18px; }
.cpu { display: grid; grid-template-columns: 11px 1fr 32px; height: 16px; grid-template-rows: 8px 8px; font-size: 6px; line-height: 8px; background: #2d343b; text-align: right; color: #d3dade; padding-right: 2px; }
.cpu i { background: #dfe5e8; margin: 1px 0; }
.cpu em { border-right: 1px solid #aab3b8; border-bottom: 1px solid #aab3b8; height: 3px; width: 3px; justify-self: end; }
.win { display: flex; justify-content: flex-end; gap: 1px; }
.win .tb { width: 9px; height: 9px; }
.win .tb svg { width: 7px; height: 7px; }
.pitch { appearance: none; width: 94px; height: 15px; margin: 0; background: linear-gradient(#4a5359, #4a5359) center / 90px 2px no-repeat; }
.pitch::-webkit-slider-thumb { appearance: none; width: 8px; height: 10px; border-radius: 4px; background: linear-gradient(90deg, #353d42 3px, #a8bf9a 3px 5px, #353d42 5px); }
.snap { display: grid; grid-template-columns: 8px 1fr 6px; align-items: center; height: 12px; background: linear-gradient(90deg, transparent 8px, #3d454b 8px); color: #cfd6d9; font-size: 7px; }
.snap svg { width: 7px; height: 7px; color: #343c41; }
.snap select { padding-left: 3px; width: 100%; }
.patsel { display: grid; grid-template-columns: 8px 48px 8px; align-items: center; height: 14px; line-height: 14px; }
.patsel button { background: #3c444a; height: 13px; line-height: 12px; }
.patsel output { background: #bccbd5; color: #29343d; font-size: 8px; text-align: right; padding-right: 3px; }
.news { display: flex; align-items: center; justify-content: space-between; height: 17px; margin-left: -4px; padding: 0 3px; background: #51686a; font-size: 6px; line-height: 8px; color: #dbe6e6; white-space: nowrap; }
.news em { color: #8fa6a6; }

.work { display: flex; flex: 1; min-height: 0; }

/* browser */
.browser { width: 121px; flex: none; display: flex; flex-direction: column; border-right: 1px solid #2f373c; }
.bhead { height: 25px; background: #454e54; color: #a2abb0; flex: none; }
.crumb { display: flex; align-items: center; gap: 3px; height: 12px; padding-left: 3px; }
.crumb svg { width: 7px; height: 7px; }
.btabs { display: flex; justify-content: space-between; padding: 1px 17px; height: 11px; align-items: center; }
.btabs svg { width: 8px; height: 8px; }
.gold { color: #e4aa42; }
.blist { display: flex; flex: 1; min-height: 0; }
.rail { width: 7px; background: #303940; display: flex; flex-direction: column; justify-content: space-between; }
.rail svg { width: 7px; height: 7px; fill: none; stroke: #16202a; }
.rail i { flex: 1; margin: 20px 2px 175px; background: #262f36; border-radius: 1px; }
.items { flex: 1; display: flex; flex-direction: column; min-width: 0; }
.folders { display: grid; grid-auto-rows: 1fr; height: 92px; background: #162128; color: #8aabc8; }
.items li { display: flex; align-items: center; gap: 3px; padding-left: 10px; min-height: 0; }
.folders svg { width: 7px; height: 7px; fill: #7fa9cf; }
.folders .open { background: #2b3840; color: #c4dcf0; font-weight: 500; }
.folders .open::after { content: ""; margin: 0 3px 0 auto; border: 2px solid transparent; border-top: 3px solid #10181e; border-bottom: 0; }
.files { flex: 1; display: grid; grid-auto-rows: 1fr; background: #37363e; color: #b2b1b1; min-height: 0; }
.files svg { width: 6px; height: 6px; fill: #d9996b; }
.files path { stroke: #5a3423; fill: none; stroke-width: 1.2; }
.items .sel { color: #f4f4f4; padding-left: 15px; font-weight: 500; }

/* channel rack */
.rack { width: 152px; flex: none; margin-left: 3px; display: flex; flex-direction: column; overflow: hidden; border-left: 1px solid #2f373c; background: #454e54; }
.rhead { height: 15px; display: flex; align-items: center; gap: 4px; padding-left: 4px; color: #a2abb0; white-space: nowrap; flex: none; }
.rhead > svg { width: 8px; height: 8px; }
.rhead > .rsel { margin-left: 29px; }
.rsel { width: 66px; height: 12px; background: #3b4349; display: flex; align-items: center; justify-content: space-between; padding: 0 2px; box-sizing: border-box; flex: none; color: #838d93; }
.channels { background: #626c73; padding: 9px 0 8px 2px; margin-left: 1px; flex: none; }
.channels li { display: grid; grid-template-columns: 6px 8px 8px 17px 65px 4px 1fr; column-gap: 1px; align-items: center; height: 15px; padding-left: 2px; }
.led { width: 4px; height: 4px; border-radius: 2px; background: #a9e04f; border: 1px solid #3f6b2a; box-sizing: border-box; }
.dial { width: 7px; height: 7px; border-radius: 4px; background: linear-gradient(90deg, transparent 3px, #bcc5c9 3px 4px, transparent 4px) top / 7px 3px no-repeat #353d42; }
.dial.r { background: linear-gradient(#bcc5c9, #bcc5c9) 4px 3px / 3px 1px no-repeat #353d42; }
.channels output { height: 13px; line-height: 11px; font-size: 7px; border: 1px solid #485157; border-radius: 2px; box-sizing: border-box; text-align: right; color: #b0b8bd; background: #5a646a; }
.channels output small { font-size: 6px; margin-left: 1px; }
.channels button { margin-left: 3px; margin-right: -3px; height: 13px; border: 1px solid #0003; border-top-color: #fff2; box-sizing: border-box; font-size: 6px; line-height: 10px; color: #edf2f4; display: flex; align-items: center; justify-content: center; background-image: linear-gradient(#fff1, #0001); }
.channels button.long { font-size: 5px; }
.channels button span { flex: 1; text-align: center; }
.channels button svg { width: 9px; height: 9px; margin-right: 1px; }
.lamp { width: 4px; height: 11px; margin-left: 7px; background: #4a5359; border: 1px solid #3a4348; box-sizing: border-box; }
.lamp.on { border-color: #a5e34a; background: #2f5a24; }
.steps { height: 14px; margin-left: 10px; background: #485157; }
.add { height: 15px; background: #40494f; flex: none; color: #e3e8ea; font-size: 10px; padding-left: 18px; }
.mixer { display: flex; margin-left: 1px; height: 143px; background: #39434a; border-bottom: 3px solid #303a40; box-sizing: content-box; overflow: hidden; flex: none; }
.scale { width: 22px; flex: none; }
.scale ol { width: 13px; height: 73px; margin-left: 4px; background: #323b41; border: 1px solid #293136; border-top: 0; box-sizing: border-box; font-size: 4px; line-height: 9px; text-align: center; color: #717c83; }
.scale svg { width: 10px; height: 30px; margin: 6px 0 0 6px; }
.strip { width: 22px; flex: none; display: grid; grid-template-columns: 10px 12px; align-content: start; border-right: 1px solid #303a40; box-sizing: border-box; }
.strip.master { background: #455056; border-right: 4px solid #2b3439; width: 28px; padding-left: 1px; }
.col { width: 10px; height: 106px; }
.strip input { appearance: none; writing-mode: vertical-lr; direction: rtl; width: 8px; height: 90px; margin: 14px 1px 0; background: linear-gradient(#2a3237, #2a3237) center / 2px 100% no-repeat; }
.strip.master input { background-image: linear-gradient(#8ad13c, #8ad13c); }
.strip input::-webkit-slider-thumb { appearance: none; width: 7px; height: 12px; background: linear-gradient(#d7dbe0 6px, #50585e 6px 7px, #a5a9af 7px 8px, #50585e 8px 9px, #8a8f96 9px); border-radius: 1px; }
.strip.master input::-webkit-slider-thumb { background: linear-gradient(#b4f05a 6px, #3f7d18 6px 7px, #7cc52e 7px 8px, #3f7d18 8px 9px, #6db526 9px); }
.send { width: 20px; height: 30px; margin-top: 7px; grid-column: 1 / 3; }
.below { flex: 1; background: #626c73; border-top: 1px solid #2f373c; }

/* playlist */
.playlist { flex: 1; min-width: 0; display: flex; flex-direction: column; background: #3f484e; border-left: 1px solid #2c3439; padding-left: 1px; }
.ptitle { height: 15px; display: flex; align-items: center; background: #434c52; color: #d3dadd; gap: 4px; padding-left: 3px; flex: none; }
.ptitle svg { width: 9px; height: 9px; }
.ptitle .thick path, .pwin path { stroke-width: 2.2; }
.tools { display: flex; justify-content: space-between; width: 93px; margin: 0 3px 0 5px; }
.blue { color: #63b9f2; }
.ptitle h1 { font-size: 7px; font-weight: 500; color: #dfe4e6; white-space: nowrap; }
.ptitle h1 i { color: #98a2a7; margin: 0 2px; }
.pwin { margin-left: auto; display: flex; gap: 2px; padding-right: 3px; }
.pwin svg { width: 8px; height: 8px; }
.pbody { flex: 1; min-height: 0; display: flex; }
.picker { width: 78px; margin-right: 3px; display: flex; flex-direction: column; flex: none; }
.ptabs { display: flex; justify-content: space-between; align-items: center; height: 18px; padding: 5px 15px 0 8px; box-sizing: border-box; color: #858f95; flex: none; }
.ptabs svg, .tabs svg { width: 9px; height: 9px; }
.lit { color: #e3e8ea; }
.plist { flex: 1; min-height: 0; display: flex; background: #343e46; border: 1px solid #2c343a; }
.plist ul { flex: 1; display: grid; align-content: start; grid-template-rows: repeat(10, 1fr); height: 153px; padding: 0 0 0 1px; row-gap: 2px; margin-top: 2px; }
.plist li { display: flex; align-items: center; gap: 2px; background: linear-gradient(#485158, #414a51); color: #d6dcdf; min-height: 0; padding-left: 1px; }
.plist li span { width: 32px; white-space: nowrap; }
.plist li svg { width: 29px; height: 10px; fill: #59636a; }
.plist .cur { box-shadow: inset 1px 0 #f0303f; }
.pi { width: 4px; height: 6px; flex: none; box-sizing: border-box; border: 1px solid #dfe4e6; border-right-width: 2px; background: #343d43; }
.pscroll { width: 8px; background: #3a434a; }
.pscroll i { display: block; height: 7px; border: 1px solid #59636a; }
.padd { height: 7px; line-height: 7px; color: #dfe4e6; flex: none; padding-right: 8px; }

.arr { flex: 1; min-width: 0; min-height: 0; display: grid; grid-template-columns: 53px 1fr 14px; grid-template-rows: 20px 1fr; }
.tabs { background: #566067; border-top-left-radius: 10px 20px; color: #868f95; }
.tabs > div { display: flex; justify-content: flex-end; gap: 4px; height: 11px; align-items: center; padding-right: 1px; }
.tabs > .tiny { font-size: 4px; gap: 1px; height: 8px; color: #d3dadd; }
.tiny i { width: 4px; height: 4px; border: 1px solid #d3dadd; border-radius: 3px; }
.topline { margin-left: 2px; min-width: 0; }
.mini { display: flex; height: 9px; }
.mini button { width: 10px; background: #4b555c; line-height: 8px; flex: none; }
.mini svg { flex: 1; height: 9px; min-width: 0; }
.ruler { display: flex; justify-content: space-between; height: 11px; background: #1d2931; color: #b3bdc2; font-size: 6px; line-height: 12px; }
.ruler span { flex: 1; text-align: center; width: 0; }
.corner { display: grid; grid-template-rows: 9px 11px; text-align: center; margin-right: 3px; line-height: 10px; background: #48525a; }
.heads, .lanes { min-height: 0; overflow: hidden; }
.head { height: 28px; display: grid; grid-template-columns: 1fr 9px; grid-template-rows: 14px 14px; padding-left: 1px; box-sizing: border-box; background: linear-gradient(#535c62, #474f55); border-bottom: 1px solid #3d464b; border-right: 1px solid #252d32; color: #e0e5e7; line-height: 8px; }
.head span { grid-column: 1 / 3; }
.head small { padding-left: 8px; font-size: 7px; color: #343c41; line-height: 14px; }
.head i { width: 5px; height: 5px; border-radius: 3px; place-self: center; background: #c4ee69; border: 1px solid #4d7a2c; box-sizing: border-box; margin-top: 3px; }
.fix { background: linear-gradient(#48ac4b, #40a045); }
.fix2 { background: linear-gradient(#66a94a, #5b9e41); }
.rec { background: linear-gradient(#6c757b, #60696f); }
.lanes { display: grid; }
.grid, .rows { grid-area: 1 / 1; min-height: 0; }
.grid { width: 100%; height: 448px; }
.lane { height: 28px; position: relative; border-bottom: 1px solid #1e2a32; box-sizing: border-box; z-index: 1; }
.clip { position: absolute; top: 0; height: 27px; background: #1d252bb0; overflow: hidden; }
.clip.green { background: #2b5a35; }
.ch { height: 7px; display: flex; align-items: center; gap: 1px; padding-left: 1px; font-size: 6px; line-height: 7px; color: #dfe4e6; white-space: nowrap; overflow: hidden; border-top: 1px solid #ffffff1c; box-sizing: border-box; }
.ch .pi { width: 4px; height: 5px; }
.mk { font-size: 5px; width: 5px; }
.faint { color: #b98a9e; }
.clip svg { width: 100%; height: 20px; }
.auto { background: #2b5a35; }
.vscroll { margin-right: 3px; display: flex; flex-direction: column; justify-content: space-between; background: #383f46; border-left: 1px solid #2c343a; text-align: center; }
.vscroll i { height: 15px; background: #56616a; }
.vscroll b { background: #4b555c; height: 8px; line-height: 5px; }

/* taskbar */
.taskbar { height: 24px; flex: none; display: grid; grid-template-columns: 1fr auto 1fr; align-items: center; background: linear-gradient(90deg, #2b3036 0, #2f301f 14%, #33210f 30%, #33230f 55%, #332818 74%, #2c2c33 92%); color: #f0f0f0; font-family: "Noto Sans", "Open Sans", sans-serif; font-size: 6px; line-height: 8px; }
.weather { display: flex; align-items: center; gap: 1px; padding-left: 8px; white-space: nowrap; }
.weather svg { width: 16px; height: 16px; }
.apps { display: flex; align-items: center; }
.apps button { width: 22px; height: 22px; display: grid; place-content: center; position: relative; }
.apps button svg { width: 14px; height: 14px; }
.run::after { content: ""; position: absolute; left: 9px; bottom: 0; width: 4px; height: 1px; background: #a8a8a8; }
.active { background: #fff1; border-radius: 3px; }
.active::after { left: 7px; width: 8px; height: 2px; background: #4cb0f0; }
.search { display: flex; align-items: center; width: 109px; height: 16px; border-radius: 8px; background: #51402f; padding: 0 3px 0 5px; box-sizing: border-box; margin: 0 1px; }
.search svg { width: 8px; height: 8px; }
.search input { flex: 1; min-width: 0; border: 0; background: none; padding: 0 0 0 5px; font-size: 7px; outline: none; }
.search input::placeholder { color: #d8d2cc; }
.search .art { width: 24px; height: 14px; }
.tray { display: flex; justify-content: flex-end; align-items: center; gap: 7px; padding-right: 9px; }
.tray svg { width: 9px; height: 9px; }
.lang { font-size: 6px; }
.net { display: flex; gap: 3px; margin-left: 4px; }
.tray time { text-align: right; margin: 0 -3px 0 2px; }
.tray .copilot { width: 13px; height: 13px; }
</style>
